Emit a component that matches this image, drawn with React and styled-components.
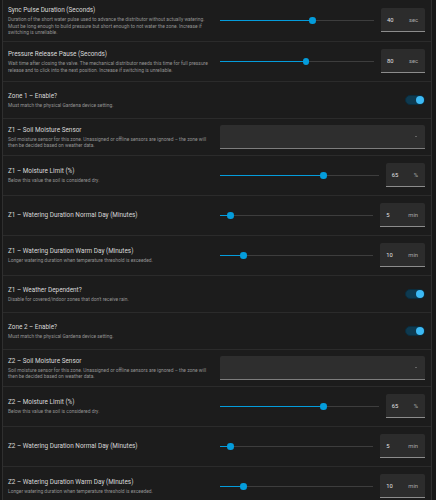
import React from 'react';
import styled, { createGlobalStyle } from 'styled-components';

const Global = createGlobalStyle`
  html, body { margin: 0; padding: 0; background: #171717; }
  body { font-family: Roboto, "Noto Sans", sans-serif; -webkit-font-smoothing: antialiased; }
`;

const Card = styled.div`
  margin: 0 4px 0 2px;
  background: #1c1c1c;
  border-left: 1px solid #2f2f2f;
  border-right: 1px solid #2f2f2f;
`;

const Row = styled.div`
  box-sizing: border-box;
  display: grid;
  grid-template-columns: 1fr 205px;
  column-gap: 6px;
  align-items: center;
  min-height: 37px;
  padding: 6px 6px 6px 5px;
  border-bottom: 1px solid #2b2b2b;
`;

const TextBlock = styled.div`
  display: flex;
  flex-direction: column;
`;

const Title = styled.div`
  font-size: 6.4px;
  font-weight: 400;
  line-height: 9px;
  color: #d8d8d8;
`;

const Desc = styled.div`
  font-size: 4.9px;
  line-height: 6.2px;
  color: #939393;
  margin-top: 1.3px;
`;

const SliderControl = styled.div`
  display: flex;
  align-items: center;
  gap: 7px;
  padding: 1.5px 0;
`;

const Track = styled.div`
  flex: 1;
  position: relative;
  height: 7px;
  display: flex;
  align-items: center;
`;

const Line = styled.div`
  width: 100%;
  height: 1.5px;
  background: #3d3d3d;
  position: relative;
`;

const Fill = styled.div`
  height: 100%;
  background: #049cdb;
`;

const Thumb = styled.div`
  position: absolute;
  top: 50%;
  width: 6.5px;
  height: 6.5px;
  margin-left: -3.25px;
  margin-top: -3.25px;
  border-radius: 50%;
  background: #049cdb;
`;

const InputBox = styled.div`
  box-sizing: border-box;
  display: flex;
  align-items: center;
  height: 24px;
  padding: 0 7px 0 6px;
  background: #2c2c2c;
  border-bottom: 1px solid #8c8c8c;
  border-radius: 2px 2px 0 0;
  font-size: 5.8px;
`;

const Value = styled.span`
  width: 22px;
  color: #e0e0e0;
`;

const Suffix = styled.span`
  color: #aaaaaa;
`;

const Toggle = styled.div`
  justify-self: end;
  position: relative;
  box-sizing: border-box;
  width: 20px;
  height: 10px;
  border-radius: 5px;
  background: #0e3a50;
  border: 1px solid #0a2c3d;
`;

const ToggleKnob = styled.div`
  position: absolute;
  right: 0;
  top: 0;
  width: 8px;
  height: 8px;
  border-radius: 50%;
  background: #3dbaf5;
`;

const Select = styled.div`
  box-sizing: border-box;
  height: 24px;
  display: flex;
  align-items: center;
  justify-content: flex-end;
  padding-right: 8.5px;
  background: #2e2e2e;
  border-bottom: 1.2px solid #7d7d7d;
  border-radius: 2px 2px 0 0;
`;

const Arrow = styled.div`
  width: 0;
  height: 0;
  border-left: 1.7px solid transparent;
  border-right: 1.7px solid transparent;
  border-top: 1.7px solid #9a9a9a;
`;

const SliderField = ({ frac, value, unit }) => (
  <SliderControl>
    <Track>
      <Line>
        <Fill style={{ width: `${frac * 100}%` }} />
      </Line>
      <Thumb style={{ left: `${frac * 100}%` }} />
    </Track>
    <InputBox>
      <Value>{value}</Value>
      <Suffix>{unit}</Suffix>
    </InputBox>
  </SliderControl>
);

const rows = [
  {
    title: 'Sync Pulse Duration (Seconds)',
    desc: 'Duration of the short water pulse used to advance the distributor without actually watering. Must be long enough to build pressure but short enough to not water the zone. Increase if switching is unreliable.',
    type: 'slider', frac: 0.602, value: '40', unit: 'sec',
  },
  {
    title: 'Pressure Release Pause (Seconds)',
    desc: 'Wait time after closing the valve. The mechanical distributor needs this time for full pressure release and to click into the next position. Increase if switching is unreliable.',
    type: 'slider', frac: 0.558, value: '80', unit: 'sec',
  },
  { title: 'Zone 1 – Enable?', desc: 'Must match the physical Gardena device setting.', type: 'toggle' },
  {
    title: 'Z1 – Soil Moisture Sensor',
    desc: 'Soil moisture sensor for this zone. Unassigned or offline sensors are ignored – the zone will then be decided based on weather data.',
    type: 'select',
  },
  { title: 'Z1 – Moisture Limit (%)', desc: 'Below this value the soil is considered dry.', type: 'slider', frac: 0.652, value: '65', unit: '%' },
  { title: 'Z1 – Watering Duration Normal Day (Minutes)', type: 'slider', frac: 0.07, value: '5', unit: 'min' },
  { title: 'Z1 – Watering Duration Warm Day (Minutes)', desc: 'Longer watering duration when temperature threshold is exceeded.', type: 'slider', frac: 0.152, value: '10', unit: 'min' },
  { title: 'Z1 – Weather Dependent?', desc: "Disable for covered/indoor zones that don't receive rain.", type: 'toggle' },
  { title: 'Zone 2 – Enable?', desc: 'Must match the physical Gardena device setting.', type: 'toggle' },
  {
    title: 'Z2 – Soil Moisture Sensor',
    desc: 'Soil moisture sensor for this zone. Unassigned or offline sensors are ignored – the zone will then be decided based on weather data.',
    type: 'select',
  },
  { title: 'Z2 – Moisture Limit (%)', desc: 'Below this value the soil is considered dry.', type: 'slider', frac: 0.652, value: '65', unit: '%' },
  { title: 'Z2 – Watering Duration Normal Day (Minutes)', type: 'slider', frac: 0.07, value: '5', unit: 'min' },
  { title: 'Z2 – Watering Duration Warm Day (Minutes)', desc: 'Longer watering duration when temperature threshold is exceeded.', type: 'slider', frac: 0.152, value: '10', unit: 'min' },
];

export default function App() {
  return (
    <>
      <Global />
      <Card>
        {rows.map((r, i) => (
          <Row key={i}>
            <TextBlock>
              <Title>{r.title}</Title>
              {r.desc && <Desc>{r.desc}</Desc>}
            </TextBlock>
            {r.type === 'slider' && <SliderField frac={r.frac} value={r.value} unit={r.unit} />}
            {r.type === 'toggle' && (
              <Toggle>
                <ToggleKnob />
              </Toggle>
            )}
            {r.type === 'select' && (
              <Select>
                <Arrow />
              </Select>
            )}
          </Row>
        ))}
      </Card>
    </>
  );
}
